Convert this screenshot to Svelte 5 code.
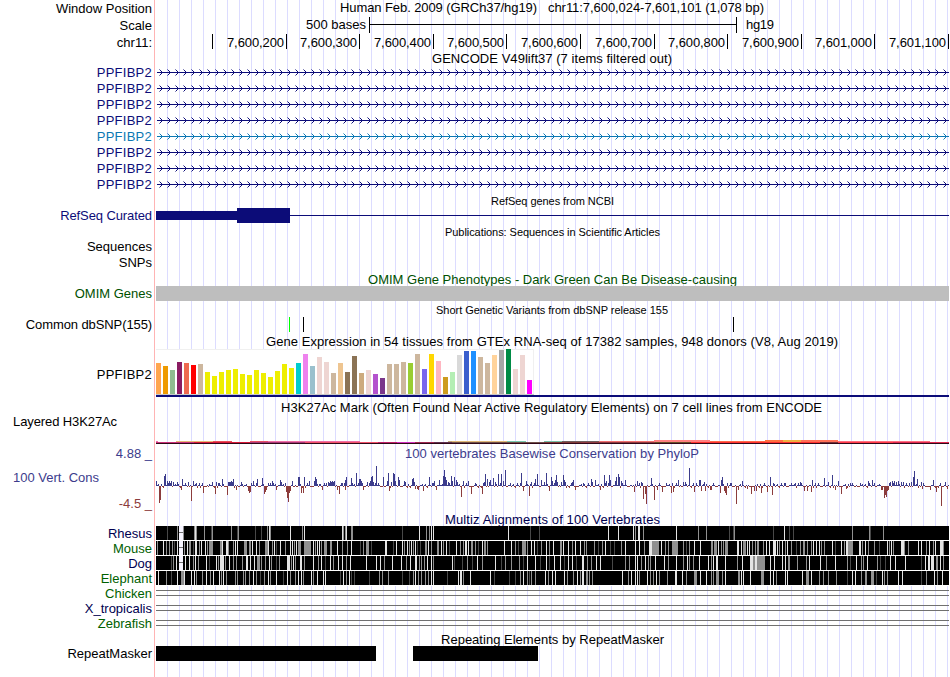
<script>
  const barColors = {
    tan: '#cdb79e', yellow: '#eeee00', pink: '#eed5d2', brown: '#8b7355'
  };

  // [top, color] for each tissue
  const tissues = [
    [363, '#ffa54f'], [366, '#ee9a00'], [370, '#8fbc8f'], [362, '#8b1c62'], [363, '#ee6a50'], [365, '#ff0000'],
    [364, 'tan'], [372, 'yellow'], [376, 'yellow'], [372, 'yellow'], [370, 'yellow'], [369, 'yellow'],
    [374, 'yellow'], [375, 'yellow'], [370, 'yellow'], [373, 'yellow'], [377, 'yellow'], [371, 'yellow'],
    [364, 'yellow'], [368, 'yellow'], [363, '#00cdcd'], [354, '#ee82ee'], [366, '#9ac0cd'], [357, 'pink'],
    [362, 'pink'], [373, 'tan'], [363, '#eec591'], [372, 'brown'], [356, 'brown'], [373, '#cdaa7d'],
    [370, 'pink'], [374, '#b452cd'], [378, '#7a378b'], [364, 'tan'], [364, 'tan'], [362, 'tan'],
    [363, '#9acd32'], [354, 'tan'], [369, '#7a67ee'], [354, '#ffd700'], [361, '#ffb6c1'], [377, '#cd9b1d'],
    [372, '#b4eeb4'], [355, '#d9d9d9'], [351, '#3a5fcd'], [351, '#1e90ff'], [357, 'tan'], [363, 'tan'],
    [355, '#ffd39b'], [350, '#a6a6a6'], [349, '#008b45'], [369, 'pink'], [355, 'pink'], [380, '#ff00ff']
  ];

  // x, y, width, color
  const marks = [
    [156, 441, 2, '#f070b0'], [176, 441, 37, '#e8b878'], [213, 441, 19, '#e85058'], [250, 441, 18, '#e85068'],
    [268, 441, 92, '#f070a8'], [448, 441, 4, '#c0a878'], [452, 441, 55, '#e0b878'], [507, 441, 19, '#78c8b0'],
    [544, 441, 18, '#78c0a8'], [562, 441, 37, '#706060'], [599, 441, 56, '#f07070'],
    [654, 440, 56, '#ff8080'], [710, 441, 55, '#ff6a4a'], [765, 440, 18, '#ff7040'], [783, 440, 18, '#f0b040'],
    [801, 440, 37, '#ff7058'], [838, 441, 92, '#ff7080'],
    [156, 442, 38, '#c83078'], [194, 442, 56, '#d81838'], [250, 442, 55, '#a83878'], [305, 442, 73, '#f05068'],
    [378, 442, 19, '#c02068'], [397, 442, 18, '#d030c0'], [415, 442, 19, '#a02850'], [434, 442, 18, '#603050'],
    [452, 442, 92, '#70504a'], [544, 442, 37, '#803838'], [581, 442, 74, '#903840'], [655, 442, 36, '#685028'],
    [691, 442, 129, '#ff3030'], [820, 442, 18, '#783038'], [838, 442, 55, '#ff3848'], [893, 442, 56, '#e02850']
  ];

  // x:height pairs, negative values hang below the baseline
  const peaks = parsePeaks(`156:5 157:1 159:-17 160:-14 164:10 165:12 167:5 168:3 169:5 170:3 171:5 173:4 177:4 182:7 181:-4 188:4
    191:-15 193:5 196:3 199:3 203:-7 209:2 212:4 215:-8 216:4 218:3 222:7 223:2 227:-9 228:4 229:4 230:4 231:5 232:4 233:7 236:-4
    241:4 242:2 248:-5 249:-7 250:-6 253:5 251:3 257:7 262:8 264:-8 265:-6 266:-4 268:3 272:5 275:2 280:6 281:4 276:-4 285:3 286:-6
    287:-12 288:-16 289:-7 290:-5 292:5 298:9 299:9 301:-7 303:-7 304:9 309:5 314:5 315:9 316:7 322:-4 319:2 326:3 328:4 329:3 330:5 331:4
    332:5 333:4 334:5 337:-4 339:-8 342:3 345:6 346:9 345:-4 351:8 352:3 356:13 358:3 359:7 360:7 361:5 362:3 363:-4 367:4 369:3 370:5
    371:9 372:10 373:4 376:20 383:9 387:5 388:13 389:-5 391:4 393:13 394:12 395:5 398:9 399:6 404:5 405:4 412:7 413:8 414:4
    415:-3 417:-3 418:-4 423:-5 429:9 433:3 434:5 436:-4 439:6 443:10 444:16 445:9 446:6 448:4 451:10 452:5 454:9 456:6 457:4
    461:-11 463:5 466:3 468:5 471:-8 475:3 482:-8 484:4 485:12 487:7 489:4 490:6 493:8 495:4 498:12 501:12 503:5 505:16 510:3 521:13
    523:-5 526:5 529:-10 531:4 535:7 537:12 541:6 544:4 546:13 549:-5 551:9 552:5 555:6 556:11 557:4 561:4 563:11 564:6 565:4 572:4
    573:6 575:-4 583:3 591:7 592:4 595:6 600:-4 604:11 606:5 609:11 610:6 615:5 616:9 618:12 619:9 621:5 625:6 634:-6 637:5 641:4
    643:-13 645:-8 646:-18 651:8 654:-14 657:-4 662:-6 666:3 671:-7 673:-6 672:3 678:6 683:4 685:4 689:18 694:-6 699:6 700:6
    701:-5 704:4 705:-5 710:-4 711:-4 720:-7 721:6 722:9 724:-5 725:-7 726:-9 730:3 731:3 736:-18 738:-4 742:5 747:-3 751:-8
    754:-5 756:-5 761:-7 767:-6 770:9 772:-9 773:3 785:3 791:3 795:3 800:4 804:-5 807:-5 812:6 811:-6 824:8 828:4 832:11
    835:-4 838:5 841:-8 846:-3 850:3 852:3 860:3 868:5 872:6 874:3 881:-4 882:-4 884:-12 885:-9 886:-11 887:-5 888:-4
    890:4 892:5 893:3 894:5 896:4 898:5 901:4 903:4 909:3 911:4 913:9 914:15 917:7 921:4 922:-3 930:-4 933:6 936:-6 941:-20 945:4 947:-3`);

  function parsePeaks(text) {
    const found = new Set();
    const list = text.trim().split(/\s+/).map((p) => p.split(':').map(Number));
    list.forEach(([x]) => found.add(x));
    for (let x = 156; x < 949; x++) {
      if (!found.has(x)) list.push([x, [1, -1, 1, 2, -1, 1, -2, 1, -1, 3, -1][(x * 7 + (x >> 3)) % 11]]);
    }
    return list;
  }

  // position, shade letter and optional width
  const species = [
    { name: 'Rhesus', color: '#000050', gap: true, bases: `167d 177g 183g 194g 195w 196g 204g 211d 212g 231g 237d 238g 255d 261d 267g 269w 270g 290w 302g 304w
      342w 343g 345g 346w 351g 352g 402d 419w 426g 429g 431w 433w 508w 530d 539d 608w 618w 633w 635g 638w2 643g 676w 698g 706g 729d
      733d 734g 773d 784w 789d 793d 852g 869g 870d 883g` },
    { name: 'Mouse', color: '#006000', gap: true, bases: `157g 163w 166g 169g 172g 174d 177w 184g 187w 189g2 193d 195w2 199g 201w 205w 207g 209g4 220g2 222w 226w2 228g
      233g 235w 237w 244g3 249g2 252w 256w 259g 265g3 268w 272g 274w 276d 280w 285g 290w 292w 294g 296w 298g3 304g7 313w 315g 317w
      319w 321g 324g3 330g2 337w 342g 347g 351w 360d 363g 366g3 371d 385w2 393d 396w 402w 404g 407w 409g 411w 413g 415w 417d 420d 425g2 428w 431g
      437g2 441w 443g 446w 449d 456w 460g 463g 465w2 468w 471g2 475g 478d 482w 484g2 487g 504w 511w 515g 518d 522g4 527g 531w 534w 537d 541g 546w 549g 553w 560g2 563w
      568w 572g 575w 580w 584g 586g 594g 598d 602g 605w 610d 614d 621g 625w 635w 639w 644g 649w3 652g7 661w 665g 668g 672g6
      683g 686d 689g 694w 700w 711g2 714g3 718w 721g 723g 725g3 737w2 741w 743g3 747w 749w 752g 755g 757g2 763g 766w 769w 773w3 777w 779g
      782w 785g 787w 791g 796d 800g 803g2 807g 811g 813w 816w 819w 821g 824g 832w 835d 841w 844g 846w2 848g5 859w2 862g 865w 868g 874g 879d 887w
      889g 891w 893g 901w3 904g 908g 918w 921w 926g 929w 933g 935w 940w3 943g` },
    { name: 'Dog', color: '#000050', gap: true, bases: `171d 173g 176w 185w 189w 193g 195w 198g 206w 209d 216w 218g 220w4 225g 229w 233g 236g 242g 246w2 250w 254w
      257g3 261g 265g 269w 271g 276d 279g 287w3 291g 293w 295g 300w2 304g 313w 318g 321w 325d 330w 333g 338w 342w 346g 350w 366w 376w
      380w 384g 392w 401w 406g 410w 415w2 419g 421g 424g 427w 431w 433g 452w 454d 462d 467g 472d 477w 482g 495w 501d 505g 511g 519g 523d 527w 535w 540d
      546w 549d 554w 560w 564d 568w 572w 576d 582w2 587g 591g 596w 600w 612d 625g 629g 635w 637w 641g 645w 648g 650g 655w 664w 668g 676w
      683g 687w 689g 693g 699w 708w 711g 713w 716w2 725w 737g 742w 750w3 753g2 755w2 757g5 762g3 770w 774w 782w 785w 788g2 797g 806g 809w 820w 826g 835w 847g 850d 856w
      861g 863g 867w 877g 880d 885d 890w 895w 905w 921d 925w 928w2 931w3 936g2 940w 943g` },
    { name: 'Elephant', color: '#006000', gap: false, bases: `158w 166g 171d 177w 181g3 184w 191w 194w 196g 202g 206w 210g 213w 219w 221g 223w 226g 235g 237g 243g 245g
      249g 253w 256g 260d 264g 268w 270g 276w 283d 287w 290g 295g 298w 301w 303g 311w 313g 317w 323w 325w 340d 343w 346g 349w 351d 354d 369d
      379g 382g 388g 402d 409d 413g 415w 418g 421g 425g 428g 431w 433w 447d 458w 460w2 463g 470w 490w 494d 509d 515d 520g 523w 527g 529d 531g 535g
      545w 548g 552w 555w 564w 567g 573g 577w 580g 582w2 586g2 589g 592g 622w 628g 631w 635w 637w 639g 647w 650g 653g 656w 659g 667g 675w2
      682w 686g 694g3 700w 706w 711g 713g 716g3 722g 725w 738g2 741w 743w 750w 761g3 770w 773w 776g 785w 787w 802w 806g3 811w 819g 823g 828g 836g
      847d 852w 855w 861g 865g2 871g3 876d 882w 884g 887g 898w 902w 921d 926g 934w 937g 942w` }
  ];

  const shades = { w: '#e4e4e4', g: '#909090', d: '#484848' };

  function parseBases(text) {
    return text.trim().split(/\s+/).map((b) => {
      const m = b.match(/(\d+)([wgd])(\d*)/);
      return { x: +m[1], fill: shades[m[2]], w: +(m[3] || 1) };
    });
  }

  const gene = '#0c0c78';
  const ticks = [212, 286, 359, 433, 506, 580, 654, 727, 801, 874, 948];

  const layout = [
    { h: 17, kind: 'position', label: 'Window Position' },
    { h: 17, kind: 'scale', label: 'Scale' },
    { h: 16, kind: 'ruler', label: 'chr11:' },
    { h: 14, title: 'GENCODE V49lift37 (7 items filtered out)', x: 432, len: 240, base: 63 },
    ...Array.from({ length: 8 }, (_, i) => ({
      h: 16, kind: 'gene', label: 'PPFIBP2', color: i === 4 ? '#0c78b4' : gene
    })),
    { h: 16, title: 'RefSeq genes from NCBI', x: 491, len: 123, base: 205, small: true },
    { h: 16, kind: 'refseq', label: 'RefSeq Curated', color: gene },
    { h: 15, title: 'Publications: Sequences in Scientific Articles', x: 445, len: 215, base: 236, small: true },
    { h: 16, kind: 'sequences', label: 'Sequences' },
    { h: 15, label: 'SNPs' },
    { h: 16, title: 'OMIM Gene Phenotypes - Dark Green Can Be Disease-causing', x: 368, len: 369, base: 284, color: '#005000' },
    { h: 15, kind: 'omim', label: 'OMIM Genes', color: '#005000' },
    { h: 15, title: 'Short Genetic Variants from dbSNP release 155', x: 436, len: 232, base: 314, small: true },
    { h: 16, kind: 'snp', label: 'Common dbSNP(155)' },
    { h: 16, title: 'Gene Expression in 54 tissues from GTEx RNA-seq of 17382 samples, 948 donors (V8, Aug 2019)', x: 266, len: 572, base: 346 },
    { h: 49, kind: 'gtex', label: 'PPFIBP2' },
    { h: 16, title: 'H3K27Ac Mark (Often Found Near Active Regulatory Elements) on 7 cell lines from ENCODE', x: 281, len: 541, base: 412 },
    { h: 31, kind: 'h3k', label: 'Layered H3K27Ac', left: true },
    { h: 18, title: '100 vertebrates Basewise Conservation by PhyloP', x: 405, len: 294, base: 458, color: '#3c3c8c', label: '4.88 _' },
    { h: 32, kind: 'cons', label: '100 Vert. Cons', left: true, color: '#3c3c8c' },
    { h: 18, label: '-4.5 _', color: '#8c3c3c' },
    { h: 14, title: 'Multiz Alignments of 100 Vertebrates', x: 445, len: 215, base: 524, color: '#000050' },
    ...species.map((s) => ({ h: 15, kind: 'align', label: s.name, color: s.color, gap: s.gap, bases: parseBases(s.bases) })),
    { h: 15, kind: 'lines', label: 'Chicken', color: '#006000' },
    { h: 15, kind: 'lines', label: 'X_tropicalis', color: '#000050' },
    { h: 15, kind: 'lines', label: 'Zebrafish', color: '#006000' },
    { h: 15, title: 'Repeating Elements by RepeatMasker', x: 441, len: 223, base: 644 },
    { h: 15, kind: 'repeat', label: 'RepeatMasker' }
  ];

  let y = 0;
  const rows = layout.map((row) => {
    const top = y;
    y += row.h;
    return { ...row, top };
  });
</script>

<div class="browser">
  {#each rows as row}
    <div class="row" style="height: {row.h}px">
      <div class="label {row.kind || ''}" class:left={row.left} style="color: {row.color || '#000'}">{row.label || ''}</div>
      <svg width="794" height={row.h} viewBox="155 {row.top} 794 {row.h}" shape-rendering="crispEdges">
        {#if row.title}
          <text x={row.x} y={row.base} textLength={row.len} class:small={row.small} fill={row.color || '#000'}>{row.title}</text>
        {/if}

        {#if row.kind === 'position'}
          <text x="340" y="12" textLength="197">Human Feb. 2009 (GRCh37/hg19)</text>
          <text x="548" y="12" textLength="216">chr11:7,600,024-7,601,101 (1,078 bp)</text>
        {:else if row.kind === 'scale'}
          <text x="306" y="29" textLength="60">500 bases</text>
          <rect x="369" y="17" width="1" height="16" />
          <rect x="369" y="24" width="368" height="1" />
          <rect x="736" y="17" width="1" height="16" />
          <text x="746" y="29" textLength="28">hg19</text>
        {:else if row.kind === 'ruler'}
          {#each ticks as x, i}
            <rect {x} y="34" width="1" height="15" />
            {#if i > 0}
              <text x={x - 59} y="47" textLength="57">{(7600100 + i * 100).toLocaleString('en-US')}</text>
            {/if}
          {/each}
        {:else if row.kind === 'gene'}
          <rect x="157" y={row.top + 8} width="792" height="1" fill={row.color} />
          {#each Array(99) as _, i}
            <path class="arrow" d="M{159.5 + i * 8} {row.top + 5.5}l3 3l-3 3" stroke={row.color} />
          {/each}
        {:else if row.kind === 'refseq'}
          <rect x="156" y="211" width="81" height="9" fill={gene} />
          <rect x="237" y="208" width="53" height="15" fill={gene} />
          <rect x="290" y="215" width="659" height="1" fill={gene} />
        {:else if row.kind === 'omim'}
          <rect x="156" y="286" width="793" height="15" fill="#bebebe" />
        {:else if row.kind === 'snp'}
          <rect x="289" y="317" width="1" height="15" fill="#00ff00" />
          <rect x="303" y="317" width="1" height="15" />
          <rect x="733" y="317" width="1" height="15" />
        {:else if row.kind === 'gtex'}
          <rect x="156" y="349" width="378" height="46" fill="#f0f0f0" />
          <rect x="156" y="350" width="377" height="44" fill="#fff" />
          <rect x="156" y="394" width="378" height="1" fill="#c8c8c8" />
          {#each tissues as [top, color], i}
            <rect x={156 + i * 7} y={top} width="5" height={394 - top} fill={barColors[color] || color} />
          {/each}
          <rect x="156" y="395" width="793" height="2" fill={gene} />
        {:else if row.kind === 'h3k'}
          {#each marks as [x, top, width, fill]}
            <rect {x} y={top} {width} height={443 - top} {fill} />
          {/each}
          <rect x="156" y="443" width="793" height="1" fill="#300818" />
        {:else if row.kind === 'cons'}
          {#each peaks as [x, value]}
            <rect {x} y={value > 0 ? 486 - value : 486} width="1" height={Math.abs(value)} fill={value > 0 ? '#3c3c8c' : '#8c3c3c'} />
          {/each}
        {:else if row.kind === 'align'}
          <rect x="156" y={row.top} width="793" height="15" fill="#fff" />
          <rect x="156" y={row.top} width="793" height="14" />
          {#each row.bases as base}
            <rect x={base.x} y={row.top} width={base.w} height="14" fill={base.fill} />
          {/each}
          {#if row.gap}
            <rect x="179" y={row.top} width="4" height="14" fill="#f6f4ff" />
            <rect x="179" y={row.top + 6} width="4" height="1" fill="#707070" />
          {/if}
        {:else if row.kind === 'lines'}
          <rect x="156" y={row.top + 4} width="793" height="1" fill="#707070" />
          <rect x="156" y={row.top + 9} width="793" height="1" fill="#707070" />
        {:else if row.kind === 'repeat'}
          <rect x="156" y="646" width="220" height="15" />
          <rect x="413" y="646" width="125" height="15" />
        {/if}
      </svg>
    </div>
  {/each}
</div>

<style>
:global(body) {
  margin: 0;
  background: #fff;
}

.browser {
  width: 950px;
  height: 677px;
  overflow: hidden;
  font-family: "Liberation Sans", Arial, sans-serif;
  font-size: 13px;
  background:
    linear-gradient(#ffb4b4, #ffb4b4) 154px 0 / 1px 100% no-repeat,
    repeating-linear-gradient(to right, #dcdcff 0 1px, transparent 1px 12px) 167px 0 / 783px 100% no-repeat;
}

.row {
  display: grid;
  grid-template-columns: 155px 794px;
}

.label {
  display: flex;
  align-items: center;
  justify-content: flex-end;
  box-sizing: border-box;
  padding: 1px 3px 0 0;
  white-space: nowrap;
  line-height: 14px;
}

.label.left {
  justify-content: flex-start;
  padding-left: 13px;
}

.label.gene,
.label.gtex {
  letter-spacing: 0.25px;
}

.label.refseq,
.label.snp,
.label.h3k {
  letter-spacing: -0.1px;
}

.label.refseq,
.label.sequences,
.label.cons {
  padding-top: 0;
  padding-bottom: 1px;
}

.label.gtex {
  padding-top: 4px;
}

.label.h3k {
  align-items: flex-start;
  padding-top: 2px;
}

svg {
  display: block;
  overflow: visible;
}

text {
  font-size: 13px;
}

.small {
  font-size: 11px;
}

.arrow {
  fill: none;
  stroke-width: 1;
  shape-rendering: auto;
}
</style>
